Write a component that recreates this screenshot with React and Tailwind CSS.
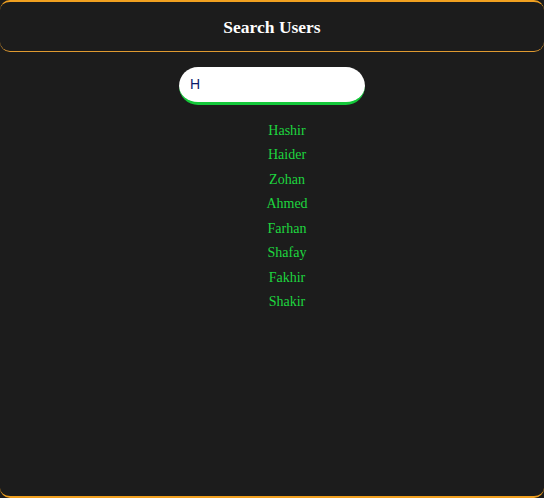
export default function App() {
  const names = ["Hashir", "Haider", "Zohan", "Ahmed", "Farhan", "Shafay", "Fakhir", "Shakir"];
  return (
    <div className="w-[544px] h-[498px] bg-[#1c1c1c] overflow-hidden">
      <div className="h-[498px] rounded-[10px] border-t-2 border-b-2 border-[#f0a020] bg-[#1c1c1c] flex flex-col">
        <div className="h-[50px] rounded-b-[10px] border-b border-[#e09a30] flex items-center justify-center pt-[1px]">
          <h1
            className="text-[17.5px] font-bold text-white"
            style={{ fontFamily: '"Liberation Serif", "Times New Roman", serif' }}
          >
            Search Users
          </h1>
        </div>
        <div className="flex justify-center mt-[15px]">
          <div className="w-[186px] h-[38px] rounded-full bg-white border-b-[3px] border-[#14c83a] flex items-center pl-[11px]">
            <span
              className="text-[14px] text-[#0a1a6a]"
              style={{ fontFamily: '"Liberation Sans", Arial, sans-serif' }}
            >
              H
            </span>
          </div>
        </div>
        <ul
          className="mt-[14px] pl-[30px] flex flex-col items-center"
          style={{ fontFamily: '"Liberation Serif", "Times New Roman", serif' }}
        >
          {names.map((n) => (
            <li key={n} className="text-[14px] leading-[24.45px] text-[#1ed63f]">
              {n}
            </li>
          ))}
        </ul>
      </div>
    </div>
  );
}
